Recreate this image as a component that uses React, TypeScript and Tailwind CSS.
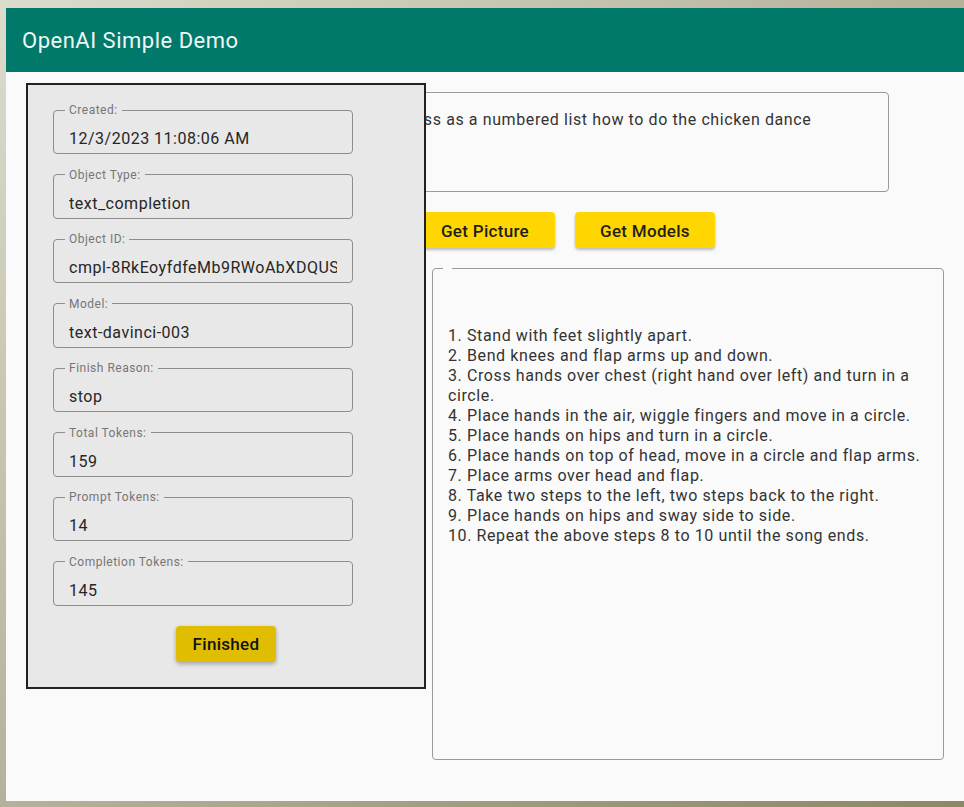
import React from "react";

const details = [
  { label: "Created:", value: "12/3/2023 11:08:06 AM" },
  { label: "Object Type:", value: "text_completion" },
  { label: "Object ID:", value: "cmpl-8RkEoyfdfeMb9RWoAbXDQUSv1xTqZ" },
  { label: "Model:", value: "text-davinci-003" },
  { label: "Finish Reason:", value: "stop" },
  { label: "Total Tokens:", value: "159" },
  { label: "Prompt Tokens:", value: "14" },
  { label: "Completion Tokens:", value: "145" },
];

const steps = [
  "1. Stand with feet slightly apart.",
  "2. Bend knees and flap arms up and down.",
  "3. Cross hands over chest (right hand over left) and turn in a circle.",
  "4. Place hands in the air, wiggle fingers and move in a circle.",
  "5. Place hands on hips and turn in a circle.",
  "6. Place hands on top of head, move in a circle and flap arms.",
  "7. Place arms over head and flap.",
  "8. Take two steps to the left, two steps back to the right.",
  "9. Place hands on hips and sway side to side.",
  "10. Repeat the above steps 8 to 10 until the song ends.",
];

const DetailField = ({ label, value }: { label: string; value: string }) => (
  <fieldset className="w-[300px] min-w-0 border border-[#8e8e8e] rounded-[4px] px-[11px] pb-[4px] mb-[13.5px]">
    <legend className="px-[4px] text-[12px] leading-[14px] tracking-[0.5px] text-[#767676]">{label}</legend>
    <div className="mx-[4px] mt-[12px] overflow-hidden whitespace-nowrap text-[16px] leading-[20px] tracking-[0.5px] text-[#262626]">
      {value}
    </div>
  </fieldset>
);

export default function App() {
  return (
    <div
      className="min-h-screen pt-[8px] pl-[6px] pb-[6px] bg-gradient-to-br from-[#dcdccd] via-[#b4b29a] to-[#8a8866]"
      style={{ fontFamily: "Roboto, 'Liberation Sans', sans-serif" }}
    >
      <div className="relative h-[793px] bg-[#fafafa] overflow-hidden">
        <header className="h-[64px] bg-[#00796b] flex items-center pl-[16px]">
          <h1 className="text-[22px] tracking-[0.5px] text-[#eef7f5] font-normal">OpenAI Simple Demo</h1>
        </header>

        <main className="pt-[20px] pl-[229px]">
          <fieldset className="w-[654px] min-w-0 h-[107px] border border-[#9a9a9a] rounded-[4px] px-[12px] -mt-[7px]">
            <legend className="px-[4px] text-[12px] leading-[14px] text-[#767676]">Prompt</legend>
            <div className="mt-[9px] ml-[133px] text-[16px] leading-[24px] tracking-[0.6px] text-[#333] whitespace-nowrap">
              Discuss as a numbered list how to do the chicken dance
            </div>
          </fieldset>

          <div className="flex gap-[20px] mt-[20px]">
            <button className="w-[160px] h-[36px] pt-[3px] rounded-[4px] bg-[#ffd600] text-[17px] tracking-[0.3px] font-medium text-[#1e1e1e] shadow-[0_2px_3px_rgba(0,0,0,0.25)]">
              Get Completion
            </button>
            <button className="w-[140px] h-[36px] pt-[3px] rounded-[4px] bg-[#ffd600] text-[17px] tracking-[0.3px] font-medium text-[#1e1e1e] shadow-[0_2px_3px_rgba(0,0,0,0.25)]">
              Get Picture
            </button>
            <button className="w-[140px] h-[36px] pt-[3px] rounded-[4px] bg-[#ffd600] text-[17px] tracking-[0.3px] font-medium text-[#1e1e1e] shadow-[0_2px_3px_rgba(0,0,0,0.25)]">
              Get Models
            </button>
          </div>

          <div className="flex gap-[20px] mt-[20px]">
            <div className="w-[177px]" />
            <fieldset className="w-[512px] min-w-0 h-[499px] border border-[#9a9a9a] rounded-[4px] px-[10px] -mt-[7px]">
              <legend className="block w-[9px] h-[14px] p-0" />
              <div className="mt-[51px] ml-[5px] text-[16px] leading-[20px] tracking-[0.6px] text-[#333]">
                {steps.map((s) => (
                  <div key={s}>{s}</div>
                ))}
              </div>
            </fieldset>
          </div>
        </main>

        <div className="absolute left-[20px] top-[75px] w-[400px] h-[606px] border-2 border-[#222] bg-[#e8e8e8] pt-[18px] pl-[25px]">
          {details.map((d) => (
            <DetailField key={d.label} label={d.label} value={d.value} />
          ))}
          <div className="flex justify-center pr-[25px] mt-[20.5px]">
            <button className="w-[100px] h-[36px] pt-[2px] rounded-[4px] bg-[#e0bd00] text-[17px] tracking-[0.3px] font-medium text-[#111] shadow-[0_2px_4px_rgba(0,0,0,0.3)]">
              Finished
            </button>
          </div>
        </div>
      </div>
    </div>
  );
}
